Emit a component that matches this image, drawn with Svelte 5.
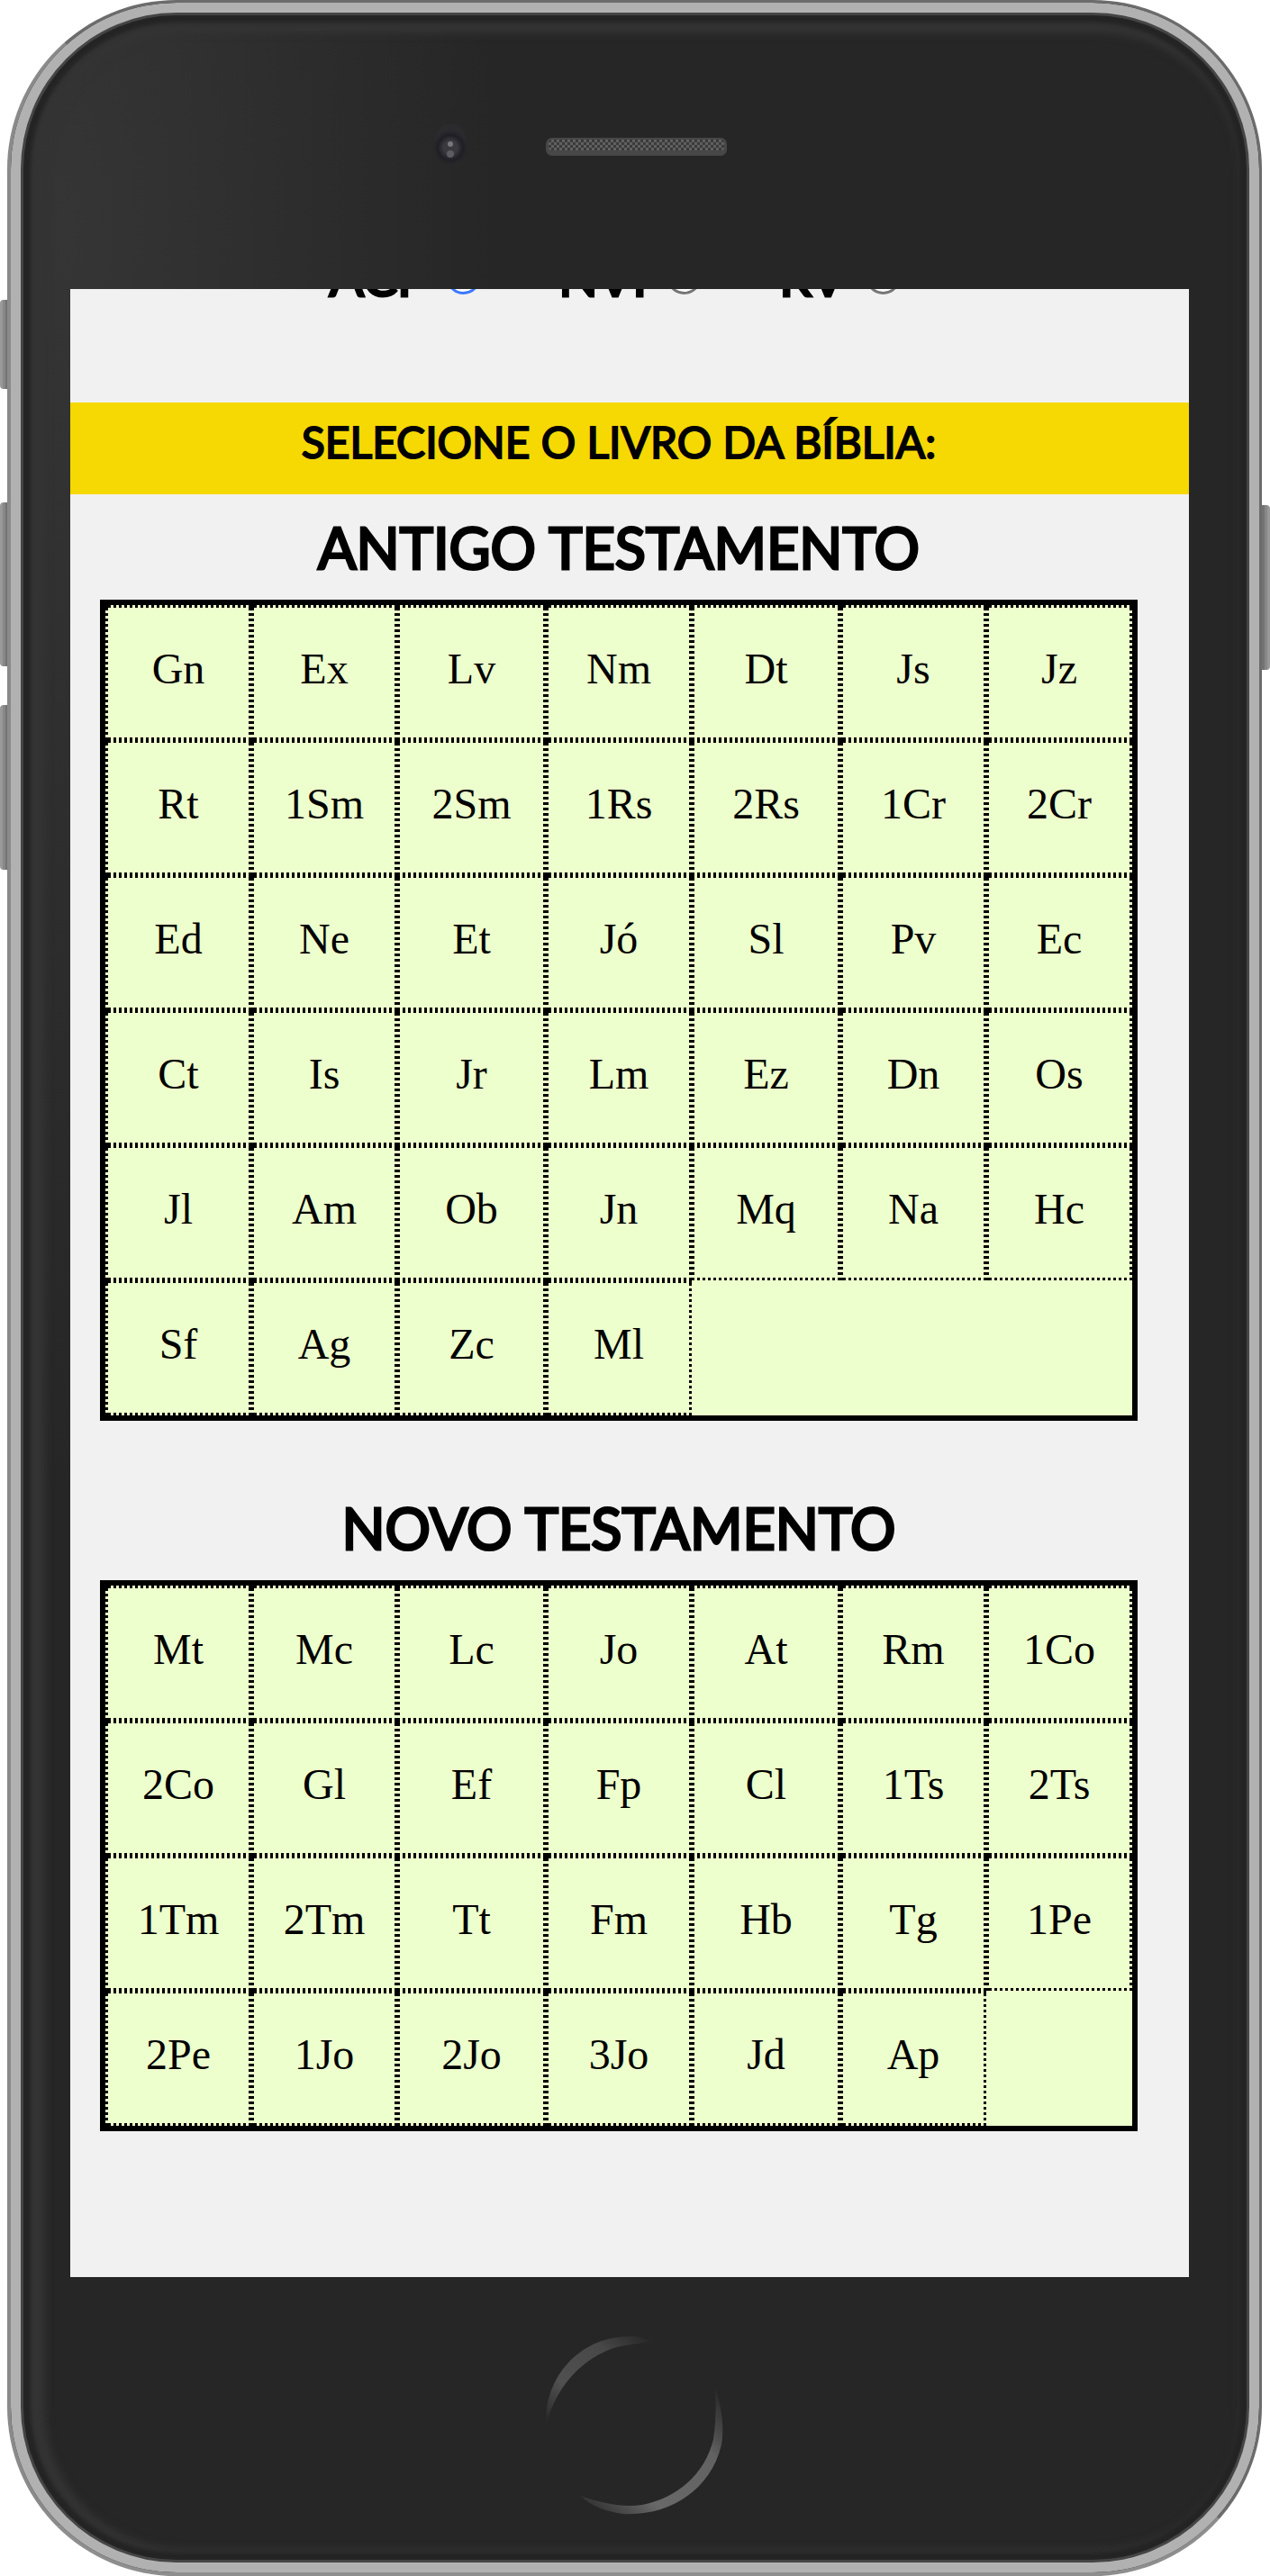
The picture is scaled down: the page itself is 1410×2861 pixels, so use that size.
<script>
  const versions = ['ACF', 'NVI', 'RV'];
  let version = $state('ACF');
  let selected = $state('');

  const testaments = [
    {
      name: 'ANTIGO TESTAMENTO',
      books: 'Gn Ex Lv Nm Dt Js Jz Rt 1Sm 2Sm 1Rs 2Rs 1Cr 2Cr Ed Ne Et Jó Sl Pv Ec Ct Is Jr Lm Ez Dn Os Jl Am Ob Jn Mq Na Hc Sf Ag Zc Ml'.split(' ')
    },
    {
      name: 'NOVO TESTAMENTO',
      books: 'Mt Mc Lc Jo At Rm 1Co 2Co Gl Ef Fp Cl 1Ts 2Ts 1Tm 2Tm Tt Fm Hb Tg 1Pe 2Pe 1Jo 2Jo 3Jo Jd Ap'.split(' ')
    }
  ];
</script>

<div class="stage">
  <i class="side mute"></i>
  <i class="side up"></i>
  <i class="side down"></i>
  <i class="side power"></i>
  <div class="phone">
    <div class="top">
      <svg class="camera" viewBox="0 0 60 60" aria-hidden="true">
        <defs>
          <radialGradient id="lens">
            <stop offset="0" stop-color="#3a3a40" />
            <stop offset="0.5" stop-color="#2e2e34" />
            <stop offset="0.7" stop-color="#1f1e24" />
            <stop offset="1" stop-color="#26252b" stop-opacity="0" />
          </radialGradient>
        </defs>
        <circle cx="30" cy="25" r="17" fill="#2b2b2e" />
        <circle cx="30" cy="35" r="20" fill="url(#lens)" />
        <circle cx="30" cy="35" r="9" fill="#39393e" />
        <circle cx="30" cy="31" r="3" fill="#77777c" />
        <circle cx="30" cy="42" r="4" fill="#5c5c62" />
      </svg>
      <svg class="speaker" viewBox="0 0 201 24" aria-hidden="true">
        <defs>
          <pattern id="mesh" width="6" height="6" patternUnits="userSpaceOnUse">
            <rect width="6" height="6" fill="#606060" />
            <rect width="3" height="3" fill="#3a3a3a" />
            <rect x="3" y="3" width="3" height="3" fill="#3a3a3a" />
          </pattern>
        </defs>
        <rect y="1" width="201" height="20" rx="7" fill="#474747" />
        <rect x="3" y="3" width="195" height="12" rx="4" fill="url(#mesh)" />
      </svg>
    </div>

    <main class="screen">
      <form class="versions">
        {#each versions as v}
          <label>{v}<input type="radio" name="version" value={v} bind:group={version} /></label>
        {/each}
      </form>
      <h1>SELECIONE O LIVRO DA BÍBLIA:</h1>
      {#each testaments as t}
        <section>
          <h2>{t.name}</h2>
          <div class="books">
            {#each t.books as book}
              <button type="button" onclick={() => (selected = book)}>{book}</button>
            {/each}
          </div>
        </section>
      {/each}
    </main>

    <div class="bottom">
      <button class="home" type="button" aria-label="Home">
        <svg viewBox="0 0 200 200" aria-hidden="true">
          <defs>
            <linearGradient id="arcA" x1="0" y1="1" x2="1" y2="0">
              <stop offset="0" stop-color="#555" stop-opacity="0" />
              <stop offset="0.3" stop-color="#505050" />
              <stop offset="0.7" stop-color="#484848" />
              <stop offset="1" stop-color="#444" stop-opacity="0" />
            </linearGradient>
            <linearGradient id="arcB" x1="0" y1="1" x2="1" y2="0">
              <stop offset="0" stop-color="#666" stop-opacity="0" />
              <stop offset="0.3" stop-color="#686868" />
              <stop offset="0.7" stop-color="#626262" />
              <stop offset="1" stop-color="#555" stop-opacity="0" />
            </linearGradient>
          </defs>
          <path d="M2 98C-2 56 32 3 92 2C102 1 110 4 118 7C100 11 87 11 73 16C35 31 12 62 2 98Z" fill="url(#arcA)" />
          <path d="M189 59C197 82 199 105 196 122C184 174 136 202 87 199C69 197 50 190 40 179C65 188 87 192 108 189C150 181 179 151 187 116C190 98 190 78 189 59Z" fill="url(#arcB)" />
        </svg>
      </button>
    </div>
  </div>
</div>

<style>
  :global(body) {
    background: #fff;
  }

  .stage {
    position: relative;
    padding: 0 9px 0 8px;
  }

  .side {
    position: absolute;
    left: 0;
    width: 10px;
    background: linear-gradient(90deg, #999 0 3px, #888 3px 6px, #737373 6px);
    border-radius: 4px 0 0 4px;
  }
  .mute {
    top: 333px;
    height: 99px;
  }
  .up {
    top: 558px;
    height: 182px;
  }
  .down {
    top: 783px;
    height: 183px;
  }
  .power {
    top: 561px;
    left: auto;
    right: 0;
    height: 183px;
    border-radius: 0 4px 4px 0;
    background: linear-gradient(270deg, #999 0 3px, #888 3px 6px, #737373 6px);
  }

  .phone {
    position: relative;
    box-sizing: border-box;
    border: 3px solid #6c6c6c;
    border-left: 4px solid #8a8a8a;
    border-bottom: 4px solid #8e8e8e;
    border-radius: 188px;
    padding: 0 78px 0 66px;
    background: radial-gradient(ellipse 480px 1400px at 60px 250px, #353535, #262626);
    box-shadow:
      inset 0 0 0 11px #b1b1b1,
      inset 0 0 0 14px #454545,
      inset 0 0 4px 22px #242424,
      inset 8px 4px 10px 30px #343434;
  }

  .top {
    position: relative;
    height: 318px;
  }
  .camera {
    position: absolute;
    left: 392px;
    top: 126px;
    width: 60px;
  }
  .speaker {
    position: absolute;
    left: 528px;
    top: 149px;
    width: 201px;
  }

  .screen {
    box-sizing: border-box;
    min-height: 2208px;
    overflow: hidden;
    background: #f1f1f1;
    color: #000;
    font-family: 'Liberation Serif', serif;
  }

  .versions {
    display: flex;
    justify-content: center;
    align-items: flex-end;
    gap: 86px;
    height: 6px;
    margin-bottom: 120px;
    padding-right: 33px;
    font: 400 57px/40px Lato, sans-serif;
    -webkit-text-stroke: 3px #000;
  }
  .versions label {
    display: flex;
    align-items: flex-end;
    gap: 22px;
    height: 48px;
  }
  input {
    appearance: none;
    box-sizing: border-box;
    width: 39px;
    height: 39px;
    margin: 0;
    border: 3px solid #767676;
    border-radius: 50%;
    background: #fff;
  }
  input:checked {
    border-color: #3b78ff;
  }

  /* Regular cut thickened with a stroke, for a softer bold */
  h1,
  h2 {
    margin: 0;
    text-align: center;
    font-family: Lato, sans-serif;
    font-weight: 400;
  }
  h1 {
    padding: 14px 24px 28px 0;
    background: #f6d803;
    font-size: 48px;
    line-height: 60px;
    -webkit-text-stroke: 2px #000;
  }
  h2 {
    padding: 21px 0;
    font-size: 63px;
    line-height: 75px;
    -webkit-text-stroke: 3px #000;
  }

  section {
    padding: 0 57px 60px 33px;
  }

  .books {
    display: grid;
    grid-template-columns: 162fr 162fr 165fr 162fr 165fr 162fr 162fr;
    grid-auto-rows: 150px;
    border: 6px solid #000;
    background: #edffcc;
  }
  /* Square-dotted frame: the dots of each side are counted from the far corner */
  .books button {
    border: 0;
    padding: 0 0 8px;
    color: #000;
    font: 48px/54px 'Liberation Serif', serif;
    background:
      linear-gradient(#000, #000) top left / 3px 3px no-repeat,
      repeating-linear-gradient(270deg, #000 0 3px, transparent 3px 6px) top / 100% 3px no-repeat,
      repeating-linear-gradient(270deg, #000 0 3px, transparent 3px 6px) bottom / 100% 3px no-repeat,
      repeating-linear-gradient(0deg, #000 0 3px, transparent 3px 6px) left / 3px 100% no-repeat,
      repeating-linear-gradient(0deg, #000 0 3px, transparent 3px 6px) right / 3px 100% no-repeat;
  }

  .bottom {
    display: flex;
    justify-content: center;
    height: 328px;
    padding-top: 64px;
    padding-left: 12px;
    box-sizing: border-box;
  }
  .home {
    width: 200px;
    height: 200px;
    padding: 0;
    border: 0;
    border-radius: 50%;
    background: none;
  }
  .home svg {
    display: block;
  }
</style>
